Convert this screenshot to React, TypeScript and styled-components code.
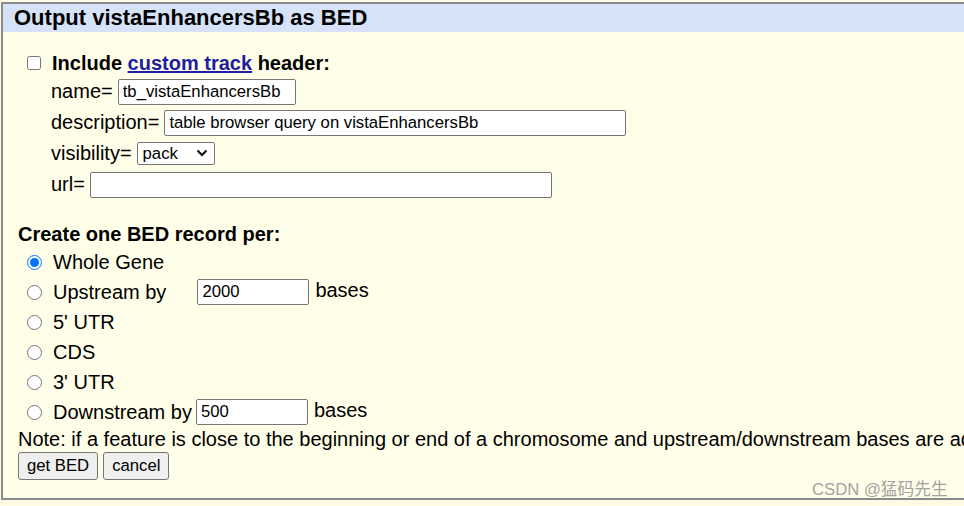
import React from "react";
import styled, { createGlobalStyle } from "styled-components";

const Global = createGlobalStyle`
  html, body { margin: 0; padding: 0; }
  body {
    background: #fffbe3;
    font-family: "Liberation Sans", Arial, sans-serif;
    color: #000;
    overflow: hidden;
    width: 964px;
    height: 506px;
  }
`;

const Panel = styled.div`
  margin: 2px 0 0 1px;
  width: 1300px;
  height: 494px;
  border: 2px solid #8a8a8a;
  background: #fffee8;
  box-sizing: content-box;
`;

const Header = styled.div`
  height: 28px;
  line-height: 28px;
  background: #d6e2f7;
  padding-left: 11px;
  font-size: 22px;
  font-weight: bold;
`;

const Body = styled.div`
  display: flex;
  flex-direction: column;
  padding-top: 18px;
`;

const Row = styled.div<{ $h: number; $indent: number; $top?: number }>`
  display: flex;
  align-items: center;
  height: ${(p) => p.$h}px;
  padding-left: ${(p) => p.$indent}px;
  margin-top: ${(p) => p.$top ?? 0}px;
  font-size: 20px;
  white-space: nowrap;
`;

const Bold = styled.span`
  font-weight: bold;
`;

const Link = styled.a`
  color: #1e1e9e;
  text-decoration: underline;
`;

const Check = styled.input`
  width: 14px;
  height: 14px;
  margin: 0 11px 0 0;
`;

const Radio = styled.input`
  width: 15px;
  height: 15px;
  margin: 0 11px 0 0;
`;

const Label = styled.span<{ $gap?: number }>`
  margin-right: ${(p) => p.$gap ?? 4}px;
`;

const TextBox = styled.input<{ $w: number }>`
  box-sizing: border-box;
  width: ${(p) => p.$w}px;
  height: 26px;
  border: 1px solid #767676;
  border-radius: 2px;
  background: #fff;
  padding: 0 4px;
  font-family: "Liberation Sans", Arial, sans-serif;
  font-size: 16.7px;
  color: #000;
  outline: none;
`;

const SelectWrap = styled.div`
  position: relative;
  box-sizing: border-box;
  width: 78px;
  height: 23px;
  border: 1px solid #767676;
  border-radius: 2px;
  background: #fff;
  display: flex;
  align-items: center;
  padding-left: 5px;
  font-size: 16.7px;
`;

const Chevron = styled.svg`
  position: absolute;
  right: 6px;
  top: 6px;
`;

const Bases = styled.span`
  margin-left: 6px;
  position: relative;
  top: -2px;
`;

const Button = styled.button`
  box-sizing: border-box;
  height: 28px;
  padding: 0 8px;
  border: 1px solid #767676;
  border-radius: 3px;
  background: #efefef;
  font-family: "Liberation Sans", Arial, sans-serif;
  font-size: 16.7px;
  color: #000;
  margin-right: 5px;
`;

const Watermark = styled.div`
  position: absolute;
  left: 812px;
  top: 476px;
  font-family: "Liberation Sans", "Noto Sans CJK SC", sans-serif;
  font-size: 16.7px;
  color: #a3a3a3;
  white-space: nowrap;
`;

const radios = [
  { label: "Whole Gene", checked: true },
  { label: "Upstream by", input: "2000", pad: 31 },
  { label: "5' UTR" },
  { label: "CDS" },
  { label: "3' UTR" },
  { label: "Downstream by", input: "500", pad: 4 },
];

export default function App() {
  return (
    <>
      <Global />
      <Panel>
        <Header>Output vistaEnhancersBb as BED</Header>
        <Body>
          <Row $h={26} $indent={24}>
            <Check type="checkbox" />
            <Bold>
              Include <Link href="#">custom track</Link> header:
            </Bold>
          </Row>
          <Row $h={31} $indent={48}>
            <Label $gap={5}>name=</Label>
            <TextBox $w={178} defaultValue="tb_vistaEnhancersBb" />
          </Row>
          <Row $h={31} $indent={48}>
            <Label $gap={5}>description=</Label>
            <TextBox $w={462} defaultValue="table browser query on vistaEnhancersBb" />
          </Row>
          <Row $h={31} $indent={48}>
            <Label $gap={5}>visibility=</Label>
            <SelectWrap>
              pack
              <Chevron width="12" height="8" viewBox="0 0 12 8">
                <path d="M1.5 1.5 L6 6 L10.5 1.5" fill="none" stroke="#000" strokeWidth="2" />
              </Chevron>
            </SelectWrap>
          </Row>
          <Row $h={31} $indent={48}>
            <Label $gap={5}>url=</Label>
            <TextBox $w={462} defaultValue="" />
          </Row>
          <Row $h={26} $indent={15} $top={21}>
            <Bold>Create one BED record per:</Bold>
          </Row>
          {radios.map((r) => (
            <Row key={r.label} $h={30} $indent={24}>
              <Radio type="radio" name="per" defaultChecked={!!r.checked} />
              <Label $gap={r.pad ?? 0}>{r.label}</Label>
              {r.input && (
                <>
                  <TextBox $w={112} defaultValue={r.input} />
                  <Bases>bases</Bases>
                </>
              )}
            </Row>
          ))}
          <Row $h={24} $indent={15}>
            Note: if a feature is close to the beginning or end of a chromosome and
            upstream/downstream bases are added, they may be truncated in order to avoid
            extending past the edge of the chromosome.
          </Row>
          <Row $h={28} $indent={15} $top={1}>
            <Button>get BED</Button>
            <Button>cancel</Button>
          </Row>
        </Body>
      </Panel>
      <Watermark>CSDN @猛码先生</Watermark>
    </>
  );
}
